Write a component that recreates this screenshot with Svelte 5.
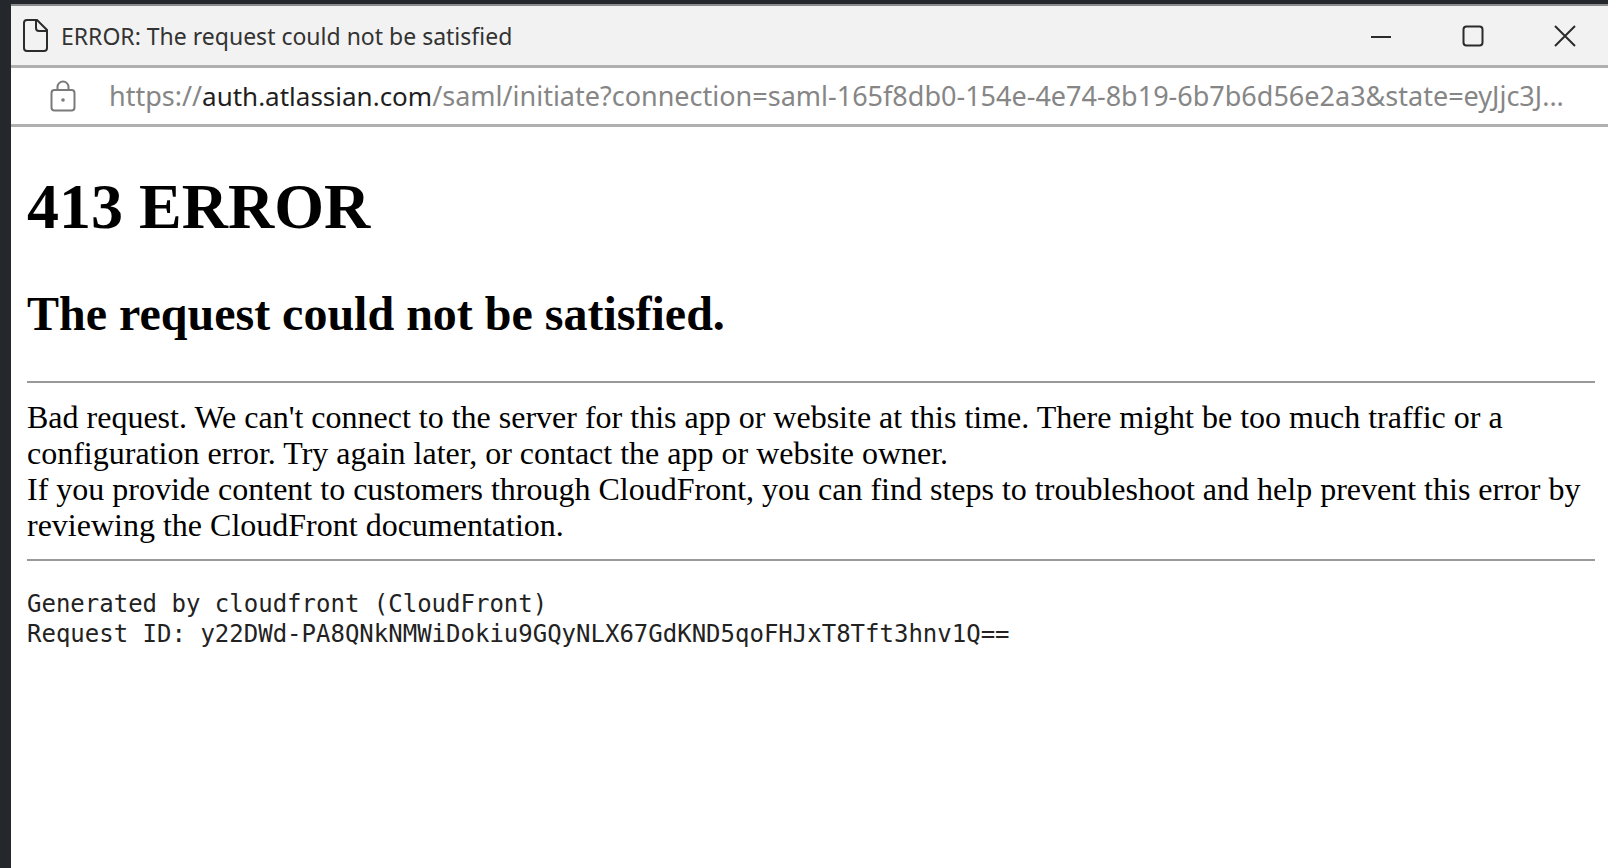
<script>
  const title = 'ERROR: The request could not be satisfied';
  const url = {
    scheme: 'https://',
    host: 'auth.atlassian.com',
    path: '/saml/initiate?connection=saml-165f8db0-154e-4e74-8b19-6b7b6d56e2a3&state=eyJjc3J...'
  };
  const requestId = 'y22DWd-PA8QNkNMWiDokiu9GQyNLX67GdKND5qoFHJxT8Tft3hnv1Q==';
</script>

<div class="window">
  <header class="titlebar">
    <svg class="page-icon" width="26" height="34" viewBox="0 0 26 34" aria-hidden="true">
      <path d="M4 1h10l10 10v18a3 3 0 0 1-3 3H4a3 3 0 0 1-3-3V4a3 3 0 0 1 3-3z" />
      <path d="M13 1v8a3 3 0 0 0 3 3h8" />
    </svg>
    <span class="title">{title}</span>
    <div class="controls">
      <button aria-label="Minimize">
        <svg width="22" height="22" viewBox="0 0 22 22"><path d="M1 12h20" /></svg>
      </button>
      <button aria-label="Maximize">
        <svg width="22" height="22" viewBox="0 0 22 22"><rect x="1.5" y="1.5" width="19" height="19" rx="3" /></svg>
      </button>
      <button aria-label="Close">
        <svg width="22" height="22" viewBox="0 0 22 22"><path d="M1 1l20 20M21 1L1 21" /></svg>
      </button>
    </div>
  </header>

  <div class="address">
    <button class="lock" aria-label="View site information">
      <svg width="26" height="32" viewBox="0 0 26 32">
        <rect x="1.5" y="10" width="23" height="20.5" rx="3" />
        <path d="M7.5 10V7a5.5 5.5 0 0 1 11 0v3" />
        <circle cx="13" cy="20" r="1.8" />
      </svg>
    </button>
    <div class="url">{url.scheme}<span class="host">{url.host}</span>{url.path}</div>
  </div>

  <main>
    <h1>413 ERROR</h1>
    <h2>The request could not be satisfied.</h2>
    <hr />
    <p>
      Bad request. We can't connect to the server for this app or website at this time. There might be too much traffic or a configuration error. Try again later, or contact the app or website owner.
      <br />
      If you provide content to customers through CloudFront, you can find steps to troubleshoot and help prevent this error by reviewing the CloudFront documentation.
    </p>
    <hr />
    <pre>Generated by cloudfront (CloudFront)
Request ID: {requestId}</pre>
  </main>
</div>

<style>
  :global(body) {
    margin: 0;
    background: #24272c;
  }

  .window {
    box-sizing: border-box;
    min-height: calc(100vh - 4px);
    margin: 4px 0 0 11px;
    border-top: 2px solid #8b8c8e;
    background: #fff;
    color: #000;
  }

  .titlebar {
    display: flex;
    align-items: center;
    height: 59px;
    padding-left: 12px;
    background: #f2f2f2;
    border-bottom: 3px solid #b0b0b0;
  }

  svg {
    display: block;
    fill: none;
    stroke: #2b2b2b;
    stroke-width: 2;
  }

  .title {
    flex: 1;
    margin-left: 12px;
    font: 23px/32px "Noto Sans", "Open Sans", sans-serif;
    color: #333;
    white-space: nowrap;
  }

  .controls {
    display: flex;
    align-self: stretch;
    gap: 6px;
  }

  button {
    display: flex;
    align-items: center;
    justify-content: center;
    padding: 0;
    border: none;
    background: none;
  }

  .controls button {
    width: 86px;
  }

  .controls button:hover {
    background: #e0e0e0;
  }

  .address {
    display: flex;
    align-items: center;
    height: 56px;
    padding: 0 39px;
    border-bottom: 3px solid #b0b0b0;
  }

  .lock svg {
    stroke: #7a7a7a;
  }

  .lock circle {
    fill: #7a7a7a;
    stroke: none;
  }

  .url {
    margin-left: 33px;
    font: 27px/36px "Noto Sans", "Open Sans", sans-serif;
    color: #868686;
    white-space: nowrap;
  }

  .host {
    font-size: 26px;
    color: #1f1f1f;
  }

  main {
    padding: 44px 13px 16px 16px;
    font: 32px/36px "Liberation Serif", "Times New Roman", serif;
  }

  h1 {
    margin: 0;
    font-size: 64px;
    line-height: 72px;
  }

  h2 {
    margin: 44px 0 40px;
    font-size: 48px;
    line-height: 54px;
  }

  hr {
    height: 2px;
    margin: 16px 0;
    border: none;
    background: #999;
  }

  p {
    margin: 0;
  }

  pre {
    margin: 28px 0;
    font: 24px/30px "DejaVu Sans Mono", "Liberation Mono", monospace;
    color: #222;
  }
</style>
